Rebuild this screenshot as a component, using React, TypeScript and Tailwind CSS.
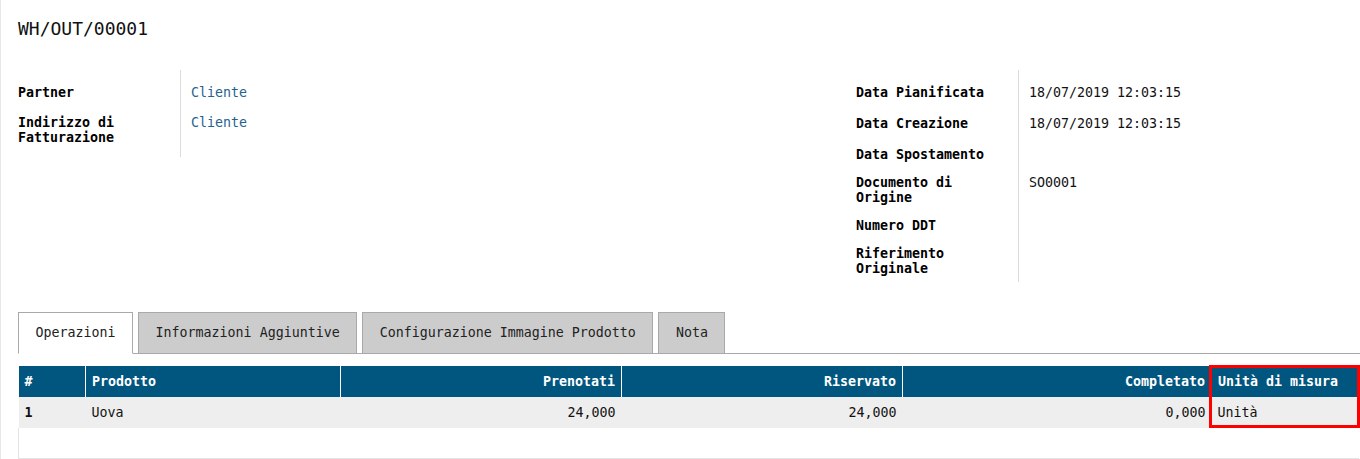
const left = [
  { label: ['Partner'], value: 'Cliente' },
  { label: ['Indirizzo di', 'Fatturazione'], value: 'Cliente' },
];

const right = [
  { label: ['Data Pianificata'], value: '18/07/2019 12:03:15' },
  { label: ['Data Creazione'], value: '18/07/2019 12:03:15' },
  { label: ['Data Spostamento'], value: '' },
  { label: ['Documento di', 'Origine'], value: 'SO0001' },
  { label: ['Numero DDT'], value: '' },
  { label: ['Riferimento', 'Originale'], value: '' },
];

const tabs = ['Operazioni', 'Informazioni Aggiuntive', 'Configurazione Immagine Prodotto', 'Nota'];

const cols = [
  { name: '#', w: 'w-[67px]', right: false },
  { name: 'Prodotto', w: 'w-[255px]', right: false },
  { name: 'Prenotati', w: 'w-[281px]', right: true },
  { name: 'Riservato', w: 'w-[281px]', right: true },
  { name: 'Completato', w: 'w-[309px]', right: true },
  { name: 'Unità di misura', w: 'w-[147px]', right: false },
];

const row = ['1', 'Uova', '24,000', '24,000', '0,000', 'Unità'];

type Field = { label: string[]; value: string };

function FieldGroup({ fields, link }: { fields: Field[]; link?: boolean }) {
  return (
    <div className="grid grid-cols-[163px_1fr]">
      {fields.map((f, i) => (
        <div key={i} className="contents">
          <div
            className={
              'border-r border-[#dcdcdc] pb-[6px] font-bold leading-[15px] text-black ' +
              (i === 0 ? 'pt-[15px]' : 'pt-[7px]') +
              (i === fields.length - 1 && link ? ' pb-[12px]' : '')
            }
          >
            {f.label.map((l) => (
              <div key={l}>{l}</div>
            ))}
          </div>
          <div
            className={
              'pb-[6px] pl-[10px] leading-[15px] ' +
              (i === 0 ? 'pt-[15px]' : 'pt-[7px]') +
              (link ? ' text-[#1f6391]' : ' text-[#111]')
            }
          >
            {f.value && <div className={link ? 'h-[17px]' : 'h-[18px]'}>{f.value}</div>}
          </div>
        </div>
      ))}
    </div>
  );
}

export default function App() {
  return (
    <div className="min-h-[459px] w-[1360px] border-l border-[#e8e8e8] bg-white pl-[17px] pr-[2px] font-['DejaVu_Sans_Mono',monospace] text-[13.3px] text-[#111]">
      <h1 className="pt-[18px] text-[18px] leading-[21px] text-[#111]">WH/OUT/00001</h1>

      <div className="mt-[31px] grid grid-cols-[838px_1fr]">
        <div>
          <FieldGroup fields={left} link />
        </div>
        <div>
          <FieldGroup fields={right} />
        </div>
      </div>

      <div className="mr-[-2px] mt-[30px] flex items-end gap-[5px] border-b border-[#a9a9a9]">
        {tabs.map((t, i) => (
          <div
            key={t}
            className={
              'flex h-[41px] items-center border border-[#a9a9a9] px-[16.5px] text-[#222] ' +
              (i === 0 ? 'mb-[-1px] h-[42px] border-b-white bg-white' : 'border-b-0 bg-[#cccccc]')
            }
          >
            {t}
          </div>
        ))}
      </div>

      <div className="relative mt-[12px]">
        <table className="w-[1340px] table-fixed border-collapse">
          <thead>
            <tr className="h-[31px] bg-[#01567f] text-white">
              {cols.map((c, i) => (
                <th
                  key={c.name}
                  className={
                    c.w +
                    ' px-[6px] font-bold ' +
                    (c.right ? 'text-right' : 'text-left') +
                    (i < cols.length - 1 ? ' border-r border-white' : '')
                  }
                >
                  {c.name}
                </th>
              ))}
            </tr>
          </thead>
          <tbody>
            <tr className="h-[31px] bg-[#eeeeee]">
              {row.map((v, i) => (
                <td
                  key={i}
                  className={
                    'px-[6px] ' +
                    (cols[i].right ? 'text-right' : 'text-left') +
                    (i === 0 ? ' font-bold' : '')
                  }
                >
                  {v}
                </td>
              ))}
            </tr>
            <tr className="h-[30px] border-b border-l border-[#e4e4e4]">
              <td colSpan={6}></td>
            </tr>
          </tbody>
        </table>
        <div className="absolute right-[-2px] top-[-1px] h-[63px] w-[151px] border-[3px] border-[#ff0000]"></div>
      </div>
    </div>
  );
}
